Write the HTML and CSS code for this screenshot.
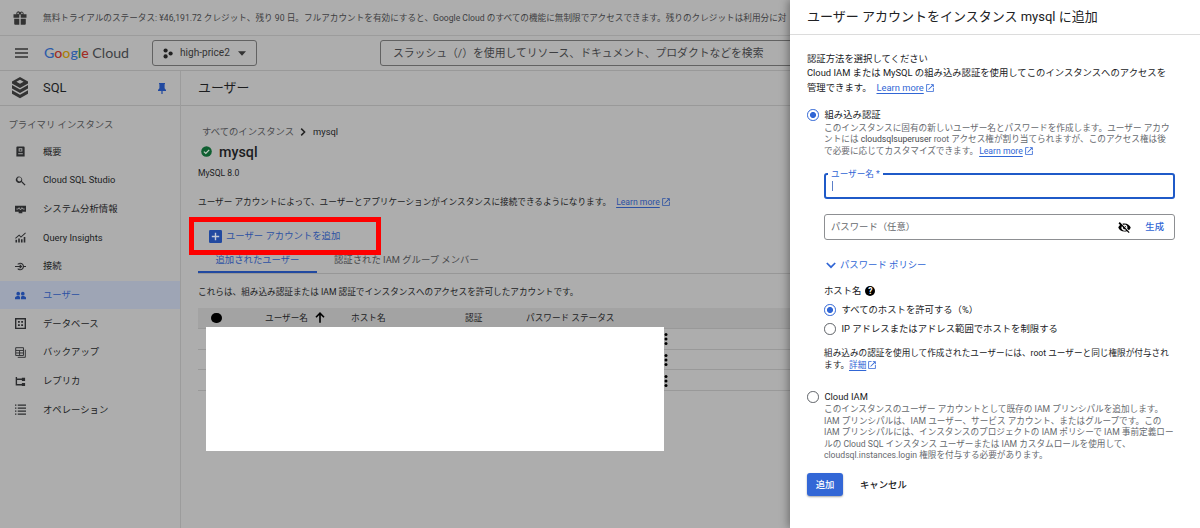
FILE: index.html
```
<!DOCTYPE html>
<html lang="ja">
  <head>
    <meta charset="utf-8">
    <title>ユーザー - SQL - Google Cloud</title>
    <link rel="stylesheet" href="styles.css">
  </head>
  <body>
    <svg class="sprite" width="0" height="0">
      <symbol id="open" viewBox="0 0 24 24"><path d="M19 19H5V5h6V3H3v18h18v-9h-2v7zM14 3v2h3.6l-9.8 9.8 1.4 1.4L19 6.4V10h2V3h-7z"/></symbol>
      <symbol id="more" viewBox="0 0 4 12"><circle cx="2" cy="1.6" r="1.5"/><circle cx="2" cy="6" r="1.5"/><circle cx="2" cy="10.4" r="1.5"/></symbol>
    </svg>

    <div class="page">
      <div class="trial">
        <svg class="gift" viewBox="0 0 14 14"><path d="M.5 3.3h3A2.1 2.1 0 0 1 6.8.9L7 1.2l.3-.3a2.1 2.1 0 0 1 3.2 2.4h3v3.5H7.7V3.6H6.3v3.2H.5zM1.2 7.7h5.1v6H2.2a1 1 0 0 1-1-1zM7.7 7.7h5.1v5a1 1 0 0 1-1 1H7.7z"/><circle cx="5.1" cy="2.4" r=".8" fill="#adadad"/><circle cx="8.9" cy="2.4" r=".8" fill="#adadad"/></svg>
        <span>無料トライアルのステータス: ¥46,191.72 クレジット、残り 90 日。フルアカウントを有効にすると、Google Cloud のすべての機能に無制限でアクセスできます。残りのクレジットは利用分に対</span>
      </div>

      <header class="topbar">
        <svg class="menu" viewBox="0 0 13 10"><path d="M0 .2h13v1.5H0zM0 4.2h13v1.5H0zM0 8.2h13v1.5H0z"/></svg>
        <div class="logo"><b class="g-blue">G</b><b class="g-red">o</b><b class="g-yellow">o</b><b class="g-blue">g</b><b class="g-green">l</b><b class="g-red">e</b> <span>Cloud</span></div>
        <div class="project">
          <svg class="dots" viewBox="0 0 10 11"><circle cx="2.6" cy="2.5" r="2.1"/><circle cx="2.6" cy="8.4" r="2.1"/><circle cx="7.6" cy="5.5" r="2.1"/></svg>
          <span>high-price2</span>
          <svg class="caret" viewBox="0 0 8 5"><path d="M0 .3h8L4 4.7z"/></svg>
        </div>
        <div class="search">スラッシュ（/）を使用してリソース、ドキュメント、プロダクトなどを検索</div>
      </header>

      <div class="columns">
        <nav class="sidebar">
          <div class="product">
            <svg class="sql" viewBox="0 0 16 22"><path d="M8 0l8 4.4v2L8 11 0 6.4v-2zM8 2.8L4.4 4.7 8 6.7l3.6-2z" fill-rule="evenodd"/><path d="M0 8.1l8 4.4 8-4.4v3.4L8 16l-8-4.5zM0 13.3l8 4.4 8-4.4v3.4l-8 4.6-8-4.6z"/></svg>
            <span>SQL</span>
            <svg class="pin" viewBox="0 0 8 11"><path d="M1 0h6v.9l-.4.4v4L8 7v1H4.6v3H3.400V8H0V7l1.400-1.700v-4L1 .9z"/></svg>
          </div>
          <div class="section">プライマリ インスタンス</div>
          <ul class="items">
            <li><svg viewBox="0 0 24 24"><path fill-rule="evenodd" d="M5 1h14a2 2 0 0 1 2 2v20H3V3a2 2 0 0 1 2-2zm3 4v7h8V5zm2 1.500h4v1.500h-4zm0 3h4V11h-4zM7 16v2h10v-2z"/></svg>概要</li>
            <li><svg viewBox="0 0 24 24"><path d="M16 14h-.8l-.3-.3A7 7 0 1 0 14 15l.3.3v.8l6.700 6.900 2-2zM9.500 14a4.500 4.500 0 1 1 0-9 4.500 4.500 0 0 1 0 9z"/></svg>Cloud SQL Studio</li>
            <li><svg viewBox="0 0 24 24"><path d="M0 4h24v13h-8v3H8v-3H0z"/><path d="M3 11h4l2-3 3 5 3-5 2 3h4" fill="none" stroke="#adadad" stroke-width="1.800"/></svg>システム分析情報</li>
            <li><svg viewBox="0 0 24 24"><path d="M1 17h3.500v6H1zM7 14h3.500v9H7zM13 16h3.500v7H13zM19 11h3.500v12H19z"/><path d="M1 14l8-7 4 4 10-9" fill="none" stroke="#2b2c2e" stroke-width="2.200"/></svg>Query Insights</li>
            <li><svg viewBox="0 0 24 24"><path d="M0 12h14M10 8l4 4-4 4M6 7.500A7 7 0 1 1 6 16.500M18 12h6" fill="none" stroke="#2b2c2e" stroke-width="2.500"/></svg>接続</li>
            <li class="active"><svg viewBox="0 0 24 24"><circle cx="7" cy="8" r="4"/><circle cx="17" cy="8" r="4"/><path d="M0 20v-3c0-3 4-4 7-4s4 1 4 4v3zM13 20v-3c0-3 1-4 4-4s7 1 7 4v3z"/></svg>ユーザー</li>
            <li><svg viewBox="0 0 24 24"><path fill-rule="evenodd" d="M0 0h24v24H0zm3 3v18h18V3z"/><path d="M6.500 6.500h4v4h-4zM13.500 6.500h4v4h-4zM6.500 13.500h4v4h-4zM13.500 13.500h4v4h-4z"/></svg>データベース</li>
            <li><svg viewBox="0 0 24 24"><path d="M1.500 1.500h17v17h-17zM2 7.500h16M10 8v10M2 13h16M22.500 6v16.500H6" fill="none" stroke="#2b2c2e" stroke-width="2"/></svg>バックアップ</li>
            <li><svg viewBox="0 0 24 24"><path d="M3 2v17h14M3 7h14" fill="none" stroke="#2b2c2e" stroke-width="3"/><path d="M15 4h7v7h-7zM15 15h7v7h-7z"/></svg>レプリカ</li>
            <li><svg viewBox="0 0 24 24"><path d="M0 1h3v3H0zM6 1h18v3H6zM0 7.500h3v3H0zM6 7.500h18v3H6zM0 14h3v3H0zM6 14h18v3H6zM0 20.500h3v3H0zM6 20.500h18v3H6z"/></svg>オペレーション</li>
          </ul>
        </nav>

        <main class="main">
          <h1 class="page-title">ユーザー</h1>
          <div class="content">
            <div class="crumbs">
              <span class="muted">すべてのインスタンス</span>
              <svg viewBox="0 0 6 8"><path d="M1.200.6L4.600 4 1.200 7.400" fill="none" stroke="#222" stroke-width="1.500"/></svg>
              <span>mysql</span>
            </div>
            <div class="instance">
              <svg viewBox="0 0 11 11"><circle cx="5.500" cy="5.500" r="5.300" fill="#0f5f31"/><path d="M2.900 5.600l1.900 1.800 3.400-3.500" fill="none" stroke="#c0cdc4" stroke-width="1.300"/></svg>
              <h2>mysql</h2>
            </div>
            <div class="version">MySQL 8.0</div>
            <p class="about">ユーザー アカウントによって、ユーザーとアプリケーションがインスタンスに接続できるようになります。<a class="link" href="#">Learn more</a><svg class="ext"><use href="#open"/></svg></p>
            <div class="add-user">
              <svg viewBox="0 0 13 13"><rect width="13" height="13" rx="1.200"/><path d="M6.500 2.800v7.400M2.800 6.500h7.400" stroke="#c3c9d6" stroke-width="1.400"/></svg>
              <span>ユーザー アカウントを追加</span>
            </div>
            <div class="tabs">
              <div class="tab selected">追加されたユーザー</div>
              <div class="tab">認証された IAM グループ メンバー</div>
            </div>
            <p class="hint">これらは、組み込み認証または IAM 認証でインスタンスへのアクセスを許可したアカウントです。</p>
            <div class="table">
              <div class="row head">
                <i class="status"></i>
                <span>ユーザー名 <svg viewBox="0 0 10 11"><path d="M5 10.800V1.500M1 5.200l4-4 4 4" fill="none" stroke="#000" stroke-width="1.600"/></svg></span>
                <span>ホスト名</span>
                <span>認証</span>
                <span>パスワード ステータス</span>
              </div>
              <div class="row"><svg class="kebab"><use href="#more"/></svg></div>
              <div class="row"><svg class="kebab"><use href="#more"/></svg></div>
              <div class="row"><svg class="kebab"><use href="#more"/></svg></div>
            </div>
          </div>
        </main>
      </div>

      <div class="mask"></div>
      <div class="highlight"></div>

      <aside class="panel">
        <h2 class="panel-title">ユーザー アカウントをインスタンス mysql に追加</h2>
        <div class="panel-body">
          <p class="intro">認証方法を選択してください<br>Cloud IAM または MySQL の組み込み認証を使用してこのインスタンスへのアクセスを<br>管理できます。<a class="link" href="#">Learn more</a><svg class="ext"><use href="#open"/></svg></p>

          <div class="option builtin"><i class="radio on"></i>組み込み認証</div>
          <div class="indent">
            <p class="desc">このインスタンスに固有の新しいユーザー名とパスワードを作成します。ユーザー アカウ<br>ントには <span class="dark">cloudsqlsuperuser</span> root アクセス権が割り当てられますが、このアクセス権は後<br>で必要に応じてカスタマイズできます。<a class="link" href="#">Learn more</a><svg class="ext"><use href="#open"/></svg></p>
            <div class="field focused"><label>ユーザー名 *</label><i class="cursor"></i></div>
            <div class="field password">
              <span>パスワード（任意）</span>
              <svg viewBox="0 0 24 24"><path d="M12 6.500a5.500 5.500 0 0 1 5 7.600l3.200 3.200A13 13 0 0 0 23.500 12C21.800 7.600 17.500 4.500 12 4.500c-1.400 0-2.700.3-4 .7l2.400 2.400c.5-.7 1-.1 1.600-1.100zM2 3.300L1 4.600l3 3A12 12 0 0 0 .5 12C2.300 16.400 6.600 19.500 12 19.500c1.600 0 3-.3 4.400-.8l3.500 3.500 1.500-1.500L3.300 2zM7 9.500L9 11a3.500 3.500 0 0 0 4.200 4.200l1.600 1.700A5.500 5.500 0 0 1 7 9.500zm4.800-.6l3.400 3.400a3.200 3.200 0 0 0-3.400-3.400z"/></svg>
              <b>生成</b>
            </div>
            <div class="policy"><svg viewBox="0 0 10 7"><path d="M.8 1L5 5.200 9.200 1" fill="none" stroke="#3166d5" stroke-width="1.700"/></svg>パスワード ポリシー</div>
            <div class="host">ホスト名<i class="help">?</i></div>
            <div class="option small"><i class="radio on"></i>すべてのホストを許可する（%）</div>
            <div class="option small"><i class="radio"></i>IP アドレスまたはアドレス範囲でホストを制限する</div>
            <p class="note">組み込みの認証を使用して作成されたユーザーには、root ユーザーと同じ権限が付与され<br>ます。<a class="link" href="#">詳細</a><svg class="ext"><use href="#open"/></svg></p>
          </div>

          <div class="option iam"><i class="radio"></i>Cloud IAM</div>
          <p class="desc indent">このインスタンスのユーザー アカウントとして既存の IAM プリンシパルを追加します。<br>IAM プリンシパルは、IAM ユーザー、サービス アカウント、またはグループです。この<br>IAM プリンシパルには、インスタンスのプロジェクトの IAM ポリシーで IAM 事前定義ロー<br>ルの Cloud SQL インスタンス ユーザーまたは IAM カスタムロールを使用して、<br>cloudsql.instances.login 権限を付与する必要があります。</p>
          <div class="actions">
            <button class="submit">追加</button>
            <button class="cancel">キャンセル</button>
          </div>
        </div>
      </aside>
    </div>
  </body>
</html>
```
FILE: styles.css
```
* {
  box-sizing: border-box;
}

body {
  margin: 0;
  font-family: Roboto, "Noto Sans CJK JP", sans-serif;
  font-size: 9.35px;
  line-height: 14px;
  color: #1c1d1f;
}

h1, h2, p, ul {
  margin: 0;
  padding: 0;
  font-weight: 400;
}

svg {
  flex: none;
  fill: currentColor;
}

.sprite {
  position: absolute;
}

.page {
  position: relative;
  width: 1200px;
  height: 528px;
  overflow: hidden;
  background: #adadad;
  white-space: nowrap;
}

/* top bars */
.trial {
  display: flex;
  align-items: center;
  height: 36px;
  padding-left: 13px;
  border-bottom: 1px solid #9c9c9c;
  font-size: 8.65px;
  color: #3d3e41;
}

.gift {
  width: 14px;
  height: 14px;
  margin-right: 16px;
  color: #333;
}

.topbar {
  display: flex;
  align-items: center;
  height: 35px;
  border-bottom: 1px solid #999;
}

.menu {
  width: 13px;
  height: 10px;
  margin: 0 16px 0 15px;
  color: #333;
}

.logo {
  width: 108px;
  font-family: Lato, sans-serif;
  font-size: 14.2px;
  color: #3e4145;
}

.logo b {
  font-weight: 500;
}

.g-blue { color: #2d5ca8; }
.g-red { color: #a12d25; }
.g-yellow { color: #ab8009; }
.g-green { color: #25713b; }

.project {
  display: flex;
  align-items: center;
  width: 105px;
  height: 26px;
  padding-left: 10px;
  border: 1px solid #626262;
  border-radius: 3px;
  color: #333;
  font-size: 10.1px;
}

.dots {
  width: 10px;
  height: 11px;
  margin-right: 7px;
  color: #222;
}

.caret {
  width: 8px;
  height: 5px;
  margin-left: 8px;
}

.search {
  width: 460px;
  height: 26px;
  margin-left: 123px;
  padding-left: 12px;
  border: 1px solid #626262;
  border-radius: 3px;
  font-size: 10.8px;
  line-height: 25px;
  color: #3d3e41;
}

.columns {
  display: flex;
  height: 457px;
}

/* sidebar */
.sidebar {
  width: 181px;
  border-right: 1px solid #9c9c9c;
}

.product {
  display: flex;
  align-items: center;
  height: 35px;
  padding-left: 12px;
  border-bottom: 1px solid #999;
  font-size: 12.9px;
}

.sql {
  width: 16px;
  height: 22px;
  margin-right: 15px;
  color: #333;
}

.pin {
  width: 8px;
  height: 11px;
  margin-left: 92px;
  color: #2149a0;
}

.section {
  height: 31.5px;
  padding: 12px 0 0 8.5px;
  color: #48494b;
}

.items {
  list-style: none;
}

.items li {
  display: flex;
  align-items: center;
  height: 28.67px;
  padding-left: 14.5px;
}

.items svg {
  width: 11px;
  height: 11px;
  margin-right: 17.5px;
  color: #2b2c2e;
}

.items .active {
  background: #9ea5b5;
  color: #2c51a3;
}

.items .active svg {
  color: #2149a0;
}

/* main column */
.main {
  flex: 1;
}

.page-title {
  height: 35px;
  padding-left: 17px;
  border-bottom: 1px solid #999;
  font-size: 12.9px;
  line-height: 34px;
}

.content {
  padding: 18px 0 0 17px;
}

.crumbs {
  display: flex;
  align-items: center;
  height: 16px;
  padding-left: 4px;
}

.crumbs svg {
  width: 6px;
  height: 8px;
  margin: 0 7px 0 6px;
}

.muted {
  color: #4a4b4d;
}

.instance {
  display: flex;
  align-items: center;
  height: 23px;
  padding-left: 3px;
}

.instance svg {
  width: 11px;
  height: 11px;
  margin-right: 7px;
}

.instance h2 {
  font-size: 14.3px;
  font-weight: 500;
}

.version {
  height: 21px;
  font-size: 8.6px;
  line-height: 20px;
}

.about {
  padding-top: 11px;
  font-size: 8.65px;
}

.link {
  margin-left: 5px;
  color: #3166d5;
  text-decoration: underline;
  text-underline-offset: 2px;
}

.ext {
  width: 10px;
  height: 10px;
  margin-left: 1px;
  color: #3166d5;
  vertical-align: -2px;
}

.main .link,
.main .ext {
  color: #2c51a3;
}

.add-user {
  display: flex;
  align-items: center;
  height: 34px;
  margin-top: 10px;
  padding-left: 11px;
  color: #2c51a3;
}

.add-user svg {
  width: 13px;
  height: 13px;
  margin-right: 4px;
  color: #2149a0;
}

.tabs {
  display: flex;
  height: 21px;
  border-bottom: 1px solid #979797;
  color: #48494b;
}

.tab {
  height: 20px;
  padding: 0 17.5px;
}

.selected {
  width: 118.5px;
  border-bottom: 2px solid #2149a0;
  color: #2c51a3;
}

.hint {
  padding: 11px 0 9px;
  font-size: 8.65px;
}

.row {
  display: flow-root;
  height: 20.8px;
  border-bottom: 1px solid #999;
}

.head {
  display: grid;
  grid-template-columns: 67px 86px 114px 61px 1fr;
  align-items: center;
  background: #a3a3a3;
  font-size: 8.65px;
}

.head span {
  display: flex;
  align-items: center;
}

.head svg {
  width: 10px;
  height: 11px;
  margin-left: 7px;
}

.status {
  width: 10.5px;
  height: 10.5px;
  margin-left: 13px;
  border-radius: 50%;
  background: #000;
}

.kebab {
  display: block;
  width: 4px;
  height: 12px;
  margin: 4.5px 0 0 466px;
  color: #000;
}

/* user list cover and the marker round the add button */
.mask {
  position: absolute;
  left: 206px;
  top: 327px;
  width: 458px;
  height: 124px;
  background: #fff;
}

.highlight {
  position: absolute;
  left: 189px;
  top: 217px;
  width: 192px;
  height: 38px;
  border: 5px solid #fe0000;
}

/* side panel */
.panel {
  position: absolute;
  top: 0;
  right: 0;
  width: 410px;
  height: 528px;
  background: #fff;
  box-shadow: -2px 0 8px rgba(0, 0, 0, 0.35);
  color: #202124;
}

.panel-title {
  height: 35px;
  padding-left: 17px;
  border-bottom: 1px solid #dcdcdc;
  font-size: 13px;
  line-height: 34px;
}

.panel-body {
  padding: 17px 17px 0;
}

.intro {
  line-height: 14.4px;
}

.option {
  display: flex;
  align-items: center;
  height: 14px;
}

.builtin {
  margin-top: 13px;
}

.radio {
  width: 11.5px;
  height: 11.5px;
  margin-right: 6px;
  border: 1.3px solid #5f6368;
  border-radius: 50%;
}

.radio.on {
  border: 1.5px solid #3166d5;
  background: radial-gradient(circle, #3166d5 2.7px, #fff 3.3px);
}

.indent {
  margin-left: 17px;
}

.desc {
  padding-top: 0.5px;
  font-size: 8.65px;
  line-height: 11.45px;
  color: #66696e;
}

.desc .link {
  margin-left: 1px;
}

.dark {
  color: #46494d;
}

.field {
  width: 351px;
  height: 26px;
  border: 1px solid #8d8f92;
  border-radius: 3px;
}

.focused {
  position: relative;
  margin-top: 16px;
  border: 2px solid #1f5ac8;
}

.focused label {
  position: absolute;
  left: 2px;
  top: -7px;
  padding: 0 3px;
  background: #fff;
  font-size: 8.65px;
  line-height: 12px;
  color: #3166d5;
}

.cursor {
  display: block;
  width: 1px;
  height: 10px;
  margin: 6px 0 0 6px;
  background: #5c7fc8;
}

.password {
  display: flex;
  align-items: center;
  margin-top: 15px;
  padding: 0 10px 0 6px;
  color: #66696e;
}

.password svg {
  width: 13px;
  height: 13px;
  margin-left: auto;
  color: #000;
}

.password b {
  margin-left: 14px;
  font-weight: 500;
  color: #3166d5;
}

.policy {
  display: flex;
  align-items: center;
  height: 14px;
  margin-top: 18px;
  padding-left: 2px;
  color: #3166d5;
}

.policy svg {
  width: 10px;
  height: 7px;
  margin-right: 4px;
}

.host {
  display: flex;
  align-items: center;
  height: 14px;
  margin-top: 12px;
}

.help {
  width: 10px;
  height: 10px;
  margin-left: 4px;
  border-radius: 50%;
  background: #000;
  font-size: 8.6px;
  font-style: normal;
  font-weight: 700;
  line-height: 10px;
  text-align: center;
  color: #fff;
}

.small {
  margin-top: 5px;
}

.note {
  margin-top: 12px;
  font-size: 8.65px;
  line-height: 11.45px;
}

.note .link {
  margin-left: 0;
}

.iam {
  margin-top: 19px;
}

.actions {
  display: flex;
  margin-top: 11.5px;
}

button {
  height: 23px;
  padding: 0;
  border: 0;
  background: none;
  font: 500 9.35px/23px Roboto, "Noto Sans CJK JP", sans-serif;
  color: #202124;
}

.submit {
  width: 36px;
  border-radius: 3px;
  background: #3367d6;
  color: #fff;
  box-shadow: 0 1px 2px rgba(0, 0, 0, 0.35);
}

.cancel {
  margin-left: 17px;
}
```
